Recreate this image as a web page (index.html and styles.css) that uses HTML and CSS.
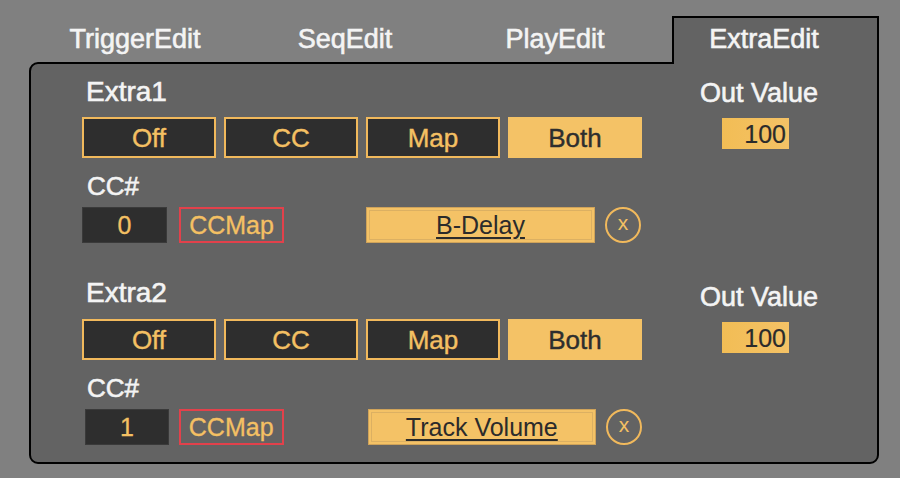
FILE: index.html
```html
<!DOCTYPE html>
<html>
<head>
<meta charset="utf-8">
<link rel="stylesheet" href="styles.css">
</head>
<body>
<div class="app">
  <div class="tabs">
    <div class="tab">TriggerEdit</div>
    <div class="tab">SeqEdit</div>
    <div class="tab">PlayEdit</div>
    <div class="tab active">ExtraEdit</div>
  </div>
  <div class="panel">
    <div class="section">
      <div class="left">
        <div class="label">Extra1</div>
        <div class="modes">
          <div class="mode">Off</div>
          <div class="mode">CC</div>
          <div class="mode">Map</div>
          <div class="mode on">Both</div>
        </div>
        <div class="label small">CC#</div>
        <div class="ccrow">
          <div class="ccnum">0</div>
          <div class="ccmap">CCMap</div>
          <div class="target">B-Delay</div>
          <div class="clear">x</div>
        </div>
      </div>
      <div class="out">
        <div class="label">Out Value</div>
        <div class="outval">100</div>
      </div>
    </div>
    <div class="section second">
      <div class="left">
        <div class="label">Extra2</div>
        <div class="modes">
          <div class="mode">Off</div>
          <div class="mode">CC</div>
          <div class="mode">Map</div>
          <div class="mode on">Both</div>
        </div>
        <div class="label small">CC#</div>
        <div class="ccrow">
          <div class="ccnum">1</div>
          <div class="ccmap">CCMap</div>
          <div class="target">Track Volume</div>
          <div class="clear">x</div>
        </div>
      </div>
      <div class="out">
        <div class="label">Out Value</div>
        <div class="outval">100</div>
      </div>
    </div>
  </div>
</div>
</body>
</html>
```

FILE: styles.css
```css
html, body {
  margin: 0;
  padding: 0;
  background: #808080;
  width: 900px;
  height: 478px;
  overflow: hidden;
}

.app {
  font-family: "Liberation Sans", Arial, sans-serif;
  color: #f4f4f4;
  padding-top: 16px;
}

.tabs {
  display: flex;
  padding-left: 30px;
  margin-bottom: -2px;
  position: relative;
  z-index: 1;
}

.tab {
  width: 210px;
  height: 48px;
  box-sizing: border-box;
  border: 2px solid transparent;
  border-bottom: none;
  padding-top: 6px;
  text-align: center;
  font-size: 27px;
  line-height: 30px;
  -webkit-text-stroke: 0.6px currentColor;
}

.tab.active {
  width: 207px;
  margin-left: 12px;
  border-color: #000;
  background: #636363;
  padding-right: 23px;
}

.panel {
  margin-left: 29px;
  width: 850px;
  height: 402px;
  box-sizing: border-box;
  border: 2px solid #000;
  border-radius: 9px 0 9px 9px;
  background: #636363;
  padding: 13px 0 0 51px;
}

.section {
  display: flex;
  gap: 58px;
}

.section.second {
  margin-top: 35px;
}

.left {
  width: 560px;
}

.label {
  font-size: 28px;
  line-height: 30px;
  padding-left: 4px;
  -webkit-text-stroke: 0.6px currentColor;
}

.label.small {
  font-size: 26px;
  margin-top: 13px;
  padding-left: 5px;
}

.modes {
  display: flex;
  gap: 8px;
  margin-top: 10px;
}

.second .modes {
  margin-top: 11px;
}

.mode {
  width: 134px;
  height: 41px;
  box-sizing: border-box;
  border: 2px solid #f1b95c;
  background: #2e2e2e;
  color: #f4c063;
  font-size: 26px;
  line-height: 39px;
  text-align: center;
  -webkit-text-stroke: 0.4px currentColor;
}

.mode.on {
  background: #f4c266;
  border-color: #f4c266;
  color: #2e2e2e;
}

.ccrow {
  display: flex;
  align-items: center;
  margin-top: 6px;
  height: 36px;
}

.ccnum {
  width: 85px;
  height: 36px;
  box-sizing: border-box;
  border: 1px solid #3a3a3a;
  background: #2e2e2e;
  color: #f4c063;
  font-size: 25px;
  line-height: 35px;
  text-align: center;
  -webkit-text-stroke: 0.3px currentColor;
}

.second .ccnum {
  margin-left: 3px;
  width: 84px;
}

.ccmap {
  margin-left: 12px;
  width: 105px;
  height: 36px;
  box-sizing: border-box;
  border: 2px solid #e2414b;
  color: #f4c063;
  font-size: 25px;
  line-height: 33px;
  text-align: center;
  -webkit-text-stroke: 0.3px currentColor;
}

.second .ccmap {
  margin-left: 10px;
}

.target {
  margin-left: 82px;
  width: 229px;
  height: 36px;
  box-sizing: border-box;
  border: 1px solid #cfa35a;
  background: #f4c266;
  box-shadow: inset 0 0 0 2px #f4c266, inset 0 0 0 3px #dcb062;
  color: #2b2b2b;
  font-size: 25px;
  line-height: 35px;
  text-align: center;
  text-decoration: underline;
  text-decoration-thickness: 2px;
  text-underline-offset: 3px;
}

.second .target {
  margin-left: 84px;
}

.clear {
  margin-left: 10px;
  width: 36px;
  height: 36px;
  box-sizing: border-box;
  border: 2.5px solid #f1b95c;
  border-radius: 50%;
  color: #f4c063;
  font-size: 21px;
  line-height: 28px;
  text-align: center;
}

.out {
  display: flex;
  flex-direction: column;
  padding-top: 1px;
}

.second .out {
  padding-top: 4px;
}

.out .label {
  font-size: 27px;
  padding-left: 0;
}

.outval {
  margin-top: 10px;
  margin-left: 22px;
  width: 67px;
  height: 31px;
  box-sizing: border-box;
  background: linear-gradient(90deg, #f2bd55, #f4c266);
  color: #2b2b2b;
  font-size: 25px;
  line-height: 32px;
  text-align: right;
  padding-right: 3px;
  -webkit-text-stroke: 0.2px currentColor;
}
```
